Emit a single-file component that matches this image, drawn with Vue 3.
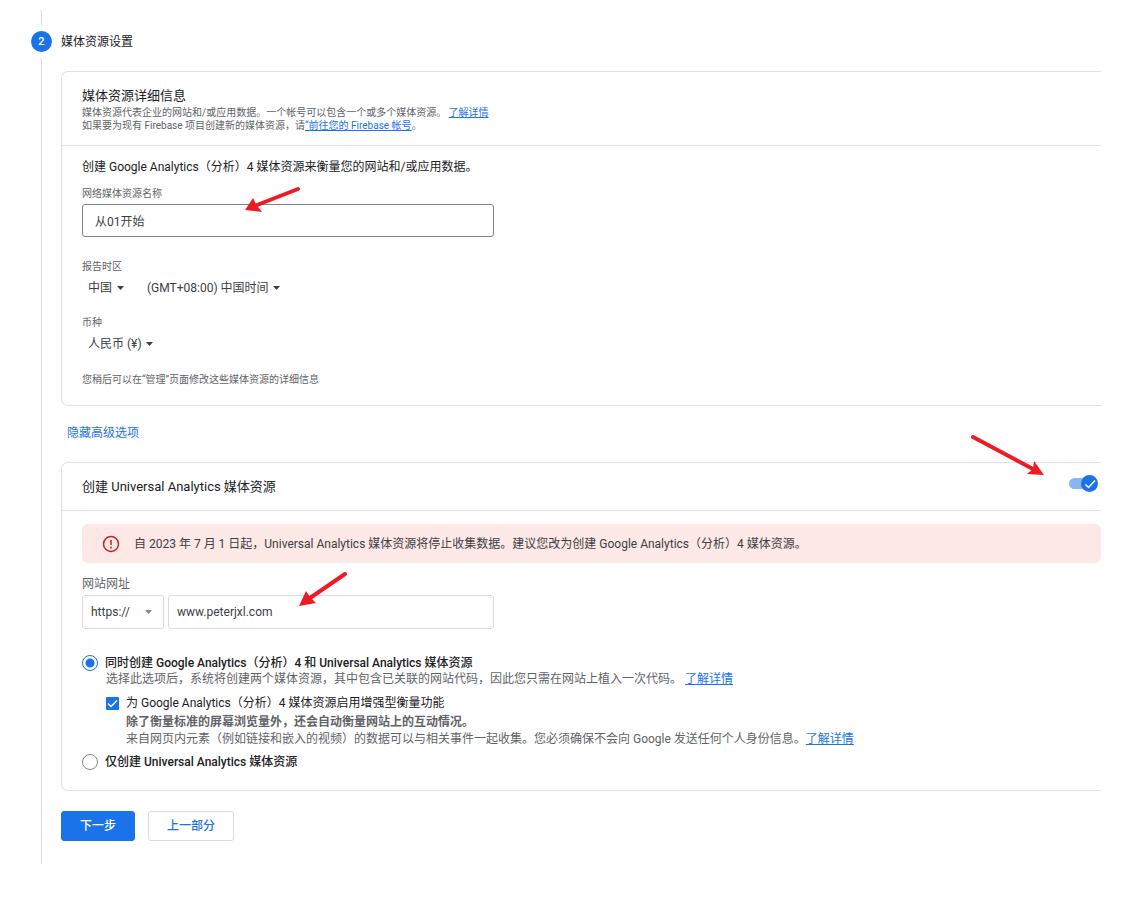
<script setup>
import { ref } from 'vue'

const propertyName = ref('从01开始')
const siteUrl = ref('www.peterjxl.com')
const createUniversal = ref(true)
const mode = ref('both')
const enhanced = ref(true)
</script>

<template>
  <main class="page" lang="zh-CN">
    <div class="rail">
      <span class="line line-top"></span>
      <span class="badge">2</span>
      <span class="line line-rest"></span>
    </div>

    <div class="content">
      <h1 class="step-title">媒体资源设置</h1>

      <section class="card">
        <header class="card-head">
          <h2>媒体资源详细信息</h2>
          <p class="small">媒体资源代表企业的网站和/或应用数据。一个帐号可以包含一个或多个媒体资源。 <a href="#">了解详情</a></p>
          <p class="small">如果要为现有 Firebase 项目创建新的媒体资源，请<a href="#">“前往您的 Firebase 帐号</a>。</p>
        </header>
        <div class="card-body">
          <p class="intro">创建 Google Analytics（分析）4 媒体资源来衡量您的网站和/或应用数据。</p>
          <div class="field name-field">
            <label class="label" for="name">网络媒体资源名称</label>
            <input id="name" v-model="propertyName" class="box name-box" type="text" />
            <svg class="arrow arrow-name" width="58" height="28" viewBox="0 0 58 28" aria-hidden="true">
              <path d="M54 4 13 20" />
              <polygon points="1,25 9,13 12,19 18,27" />
            </svg>
          </div>
          <div class="field">
            <label class="label" for="country">报告时区</label>
            <div class="selects">
              <span class="pick">
                <select id="country"><option>中国</option></select>
                <svg width="8" height="4" viewBox="0 0 8 4" aria-hidden="true"><path d="M0 0h7L3.5 4z" /></svg>
              </span>
              <span class="pick">
                <select aria-label="时区"><option>(GMT+08:00) 中国时间</option></select>
                <svg width="8" height="4" viewBox="0 0 8 4" aria-hidden="true"><path d="M0 0h7L3.5 4z" /></svg>
              </span>
            </div>
          </div>
          <div class="field">
            <label class="label" for="currency">币种</label>
            <div class="selects">
              <span class="pick">
                <select id="currency"><option>人民币 (¥)</option></select>
                <svg width="8" height="4" viewBox="0 0 8 4" aria-hidden="true"><path d="M0 0h7L3.5 4z" /></svg>
              </span>
            </div>
          </div>
          <p class="note">您稍后可以在“管理”页面修改这些媒体资源的详细信息</p>
        </div>
      </section>

      <button class="advanced" type="button">隐藏高级选项</button>

      <section class="card">
        <header class="ua-head">
          <h2>创建 Universal Analytics 媒体资源</h2>
          <svg class="arrow arrow-toggle" width="76" height="44" viewBox="0 0 76 44" aria-hidden="true">
            <path d="M4 4 64 36" />
            <polygon points="75,42 58,41 64,36 65,28" />
          </svg>
          <label class="toggle">
            <input v-model="createUniversal" type="checkbox" aria-label="创建 Universal Analytics 媒体资源" />
            <span class="knob">
              <svg width="12" height="12" viewBox="0 0 12 12" aria-hidden="true"><path d="M1.5 6.5 4.5 9.5 11 2.5" /></svg>
            </span>
          </label>
        </header>
        <div class="ua-body">
          <div class="banner">
            <svg width="18" height="18" viewBox="0 0 18 18" aria-hidden="true">
              <circle cx="9" cy="9" r="7.5" />
              <path d="M9 5v5M9 11.5v2" />
            </svg>
            <p>自 2023 年 7 月 1 日起，Universal Analytics 媒体资源将停止收集数据。建议您改为创建 Google Analytics（分析）4 媒体资源。</p>
          </div>

          <label class="url-label" for="url">网站网址</label>
          <div class="url-row">
            <span class="scheme">
              <select class="box" aria-label="协议"><option>https://</option></select>
              <svg width="8" height="4" viewBox="0 0 8 4" aria-hidden="true"><path d="M0 0h7L3.5 4z" /></svg>
            </span>
            <input id="url" v-model="siteUrl" class="box url-box" type="text" />
            <svg class="arrow arrow-url" width="50" height="38" viewBox="0 0 50 38" aria-hidden="true">
              <path d="M47 4 12 28" />
              <polygon points="1,36 8,21 12,27 18,33" />
            </svg>
          </div>

          <div class="options">
            <label class="option">
              <input v-model="mode" type="radio" name="mode" value="both" />
              <span>同时创建 Google Analytics（分析）4 和 Universal Analytics 媒体资源</span>
            </label>
            <p class="desc">选择此选项后，系统将创建两个媒体资源，其中包含已关联的网站代码，因此您只需在网站上植入一次代码。 <a href="#">了解详情</a></p>
            <div class="nested">
              <label class="check">
                <span class="tick">
                  <input v-model="enhanced" type="checkbox" />
                  <svg width="13" height="13" viewBox="0 0 13 13" aria-hidden="true"><path d="M2 6.5 5 9.5 11 3.5" /></svg>
                </span>
                <span>为 Google Analytics（分析）4 媒体资源启用增强型衡量功能</span>
              </label>
              <p class="desc strong">除了衡量标准的屏幕浏览量外，还会自动衡量网站上的互动情况。</p>
              <p class="desc">来自网页内元素（例如链接和嵌入的视频）的数据可以与相关事件一起收集。您必须确保不会向 Google 发送任何个人身份信息。<a href="#">了解详情</a></p>
            </div>
            <label class="option">
              <input v-model="mode" type="radio" name="mode" value="ua" />
              <span>仅创建 Universal Analytics 媒体资源</span>
            </label>
          </div>
        </div>
      </section>

      <div class="actions">
        <button class="primary" type="button">下一步</button>
        <button class="secondary" type="button">上一部分</button>
      </div>
    </div>
  </main>
</template>

<style>
body {
  margin: 0;
  background: #fff;
}
</style>

<style scoped>
* {
  box-sizing: border-box;
}
.page {
  display: flex;
  gap: 9px;
  padding: 10px 46px 48px 31px;
  font: 12px/16px Roboto, 'Noto Sans CJK SC', sans-serif;
  color: #3c4043;
}
h1, h2, p {
  margin: 0;
  font-weight: 400;
}
input, select, button {
  margin: 0;
  font: inherit;
  color: inherit;
}
a {
  color: #1a73e8;
}
.rail {
  display: flex;
  flex-direction: column;
  align-items: center;
  width: 21px;
  flex: none;
}
.line {
  width: 1px;
  background: #dadce0;
}
.line-top {
  height: 15px;
}
.line-rest {
  flex: 1;
}
.badge {
  width: 21px;
  height: 21px;
  margin: 6px 0;
  border-radius: 50%;
  background: #1a73e8;
  color: #fff;
  font-size: 11px;
  line-height: 21px;
  font-weight: 500;
  text-align: center;
}
.content {
  flex: 1;
  min-width: 0;
  padding-bottom: 23px;
}
.step-title {
  margin: 24px 0 21px;
  font-size: 12px;
  line-height: 16px;
  color: #202124;
}
.card {
  border: 1px solid #dfe1e5;
  border-right: 0;
  border-radius: 7px 0 0 7px;
}
.card-head {
  padding: 14px 20px 13px;
  border-bottom: 1px solid #dfe1e5;
}
h2 {
  font-size: 13px;
  line-height: 20px;
  color: #202124;
}
.small {
  font-size: 10px;
  line-height: 13px;
  color: #5f6368;
}
.card-body {
  padding: 13px 20px 18px;
}
.intro {
  color: #202124;
}
.field {
  margin-top: 19px;
}
.name-field {
  position: relative;
  margin: 12px 0 23px;
}
.label, .note {
  display: block;
  font-size: 10px;
  line-height: 14px;
  color: #5f6368;
}
.note {
  margin-top: 20px;
}
.box {
  display: block;
  height: 34px;
  border: 1px solid #dadce0;
  border-radius: 3px;
  background: #fff;
  color: #3c4043;
  outline: none;
}
.name-box {
  width: 412px;
  max-width: 100%;
  height: 33px;
  margin-top: 3px;
  padding: 0 12px;
  border-color: #80868b;
}
.selects {
  display: flex;
  gap: 22px;
  margin-top: 5px;
  padding-left: 6px;
}
.pick, .scheme {
  position: relative;
  display: flex;
}
select {
  appearance: none;
  border: 0;
  background: transparent;
  outline: none;
}
.pick select {
  height: 18px;
  padding: 0 12px 0 0;
}
.pick svg, .scheme svg {
  position: absolute;
  right: 0;
  top: 7px;
  fill: #3c4043;
  pointer-events: none;
}
.advanced {
  display: block;
  margin: 19px 0 21px;
  padding: 0 6px;
  border: 0;
  background: none;
  color: #1a73e8;
}
.ua-head {
  position: relative;
  display: flex;
  align-items: center;
  justify-content: space-between;
  height: 48px;
  padding: 0 3px 0 20px;
  border-bottom: 1px solid #dfe1e5;
}
.toggle {
  display: flex;
  align-items: center;
  position: relative;
  width: 29px;
  height: 17px;
  margin-bottom: 6px;
}
.toggle input {
  appearance: none;
  width: 26px;
  height: 11px;
  border-radius: 6px;
  background: #8ab4f8;
}
.knob {
  position: absolute;
  right: 0;
  top: 0;
  display: flex;
  align-items: center;
  justify-content: center;
  width: 17px;
  height: 17px;
  border-radius: 50%;
  background: #1a73e8;
  pointer-events: none;
}
.knob path, .tick path {
  fill: none;
  stroke: #fff;
  stroke-width: 1.5;
}
.ua-body {
  padding: 13px 0 20px 20px;
}
.banner {
  display: flex;
  align-items: center;
  gap: 14px;
  min-height: 39px;
  padding: 0 20px;
  border-radius: 6px;
  background: #fce8e6;
}
.banner svg {
  flex: none;
  fill: none;
  stroke: #c5221f;
  stroke-width: 1.5;
}
.url-label {
  display: block;
  margin: 13px 0 3px;
  color: #5f6368;
}
.url-row {
  position: relative;
  display: flex;
  gap: 4px;
  width: 412px;
  max-width: 100%;
}
.scheme select {
  width: 82px;
  padding: 0 8px;
  border: 1px solid #dadce0;
}
.scheme svg {
  right: 11px;
  top: 15px;
  fill: #80868b;
}
.url-box {
  flex: 1;
  min-width: 0;
  padding: 0 8px;
}
.options {
  margin-top: 26px;
}
.option, .check {
  display: flex;
  align-items: center;
  color: #202124;
}
.option {
  gap: 7px;
  height: 16px;
  font-weight: 500;
}
.option input {
  appearance: none;
  flex: none;
  width: 16px;
  height: 16px;
  border: 1px solid #80868b;
  border-radius: 50%;
}
.option input:checked {
  border-color: #1a73e8;
  background: radial-gradient(circle, #1a73e8 4px, #fff 5px);
}
.desc {
  padding-left: 24px;
  line-height: 17px;
  color: #5f6368;
}
.nested {
  margin: 7px 0 6px 24px;
}
.nested .desc {
  padding-left: 20px;
}
.strong {
  margin-top: 3px;
  font-weight: 700;
}
.check {
  gap: 7px;
}
.tick {
  position: relative;
  width: 13px;
  height: 13px;
}
.tick input {
  display: block;
  appearance: none;
  width: 13px;
  height: 13px;
  border-radius: 1px;
  background: #1a73e8;
}
.tick svg {
  position: absolute;
  inset: 0;
  pointer-events: none;
}
.actions {
  display: flex;
  gap: 13px;
  margin-top: 20px;
}
.actions button {
  height: 30px;
  padding: 0 18px;
  border: 1px solid #1a73e8;
  border-radius: 3px;
  font-weight: 500;
}
.actions .primary {
  background: #1a73e8;
  color: #fff;
}
.actions .secondary {
  border-color: #dadce0;
  background: #fff;
  color: #1a73e8;
}
.arrow {
  position: absolute;
  pointer-events: none;
}
.arrow path {
  fill: none;
  stroke: #ed1c24;
  stroke-width: 4;
  stroke-linecap: round;
}
.arrow polygon {
  fill: #ed1c24;
}
.arrow-name {
  left: 162px;
  top: -2px;
}
.arrow-toggle {
  right: 56px;
  top: -30px;
}
.arrow-url {
  left: 216px;
  top: -25px;
}
</style>
